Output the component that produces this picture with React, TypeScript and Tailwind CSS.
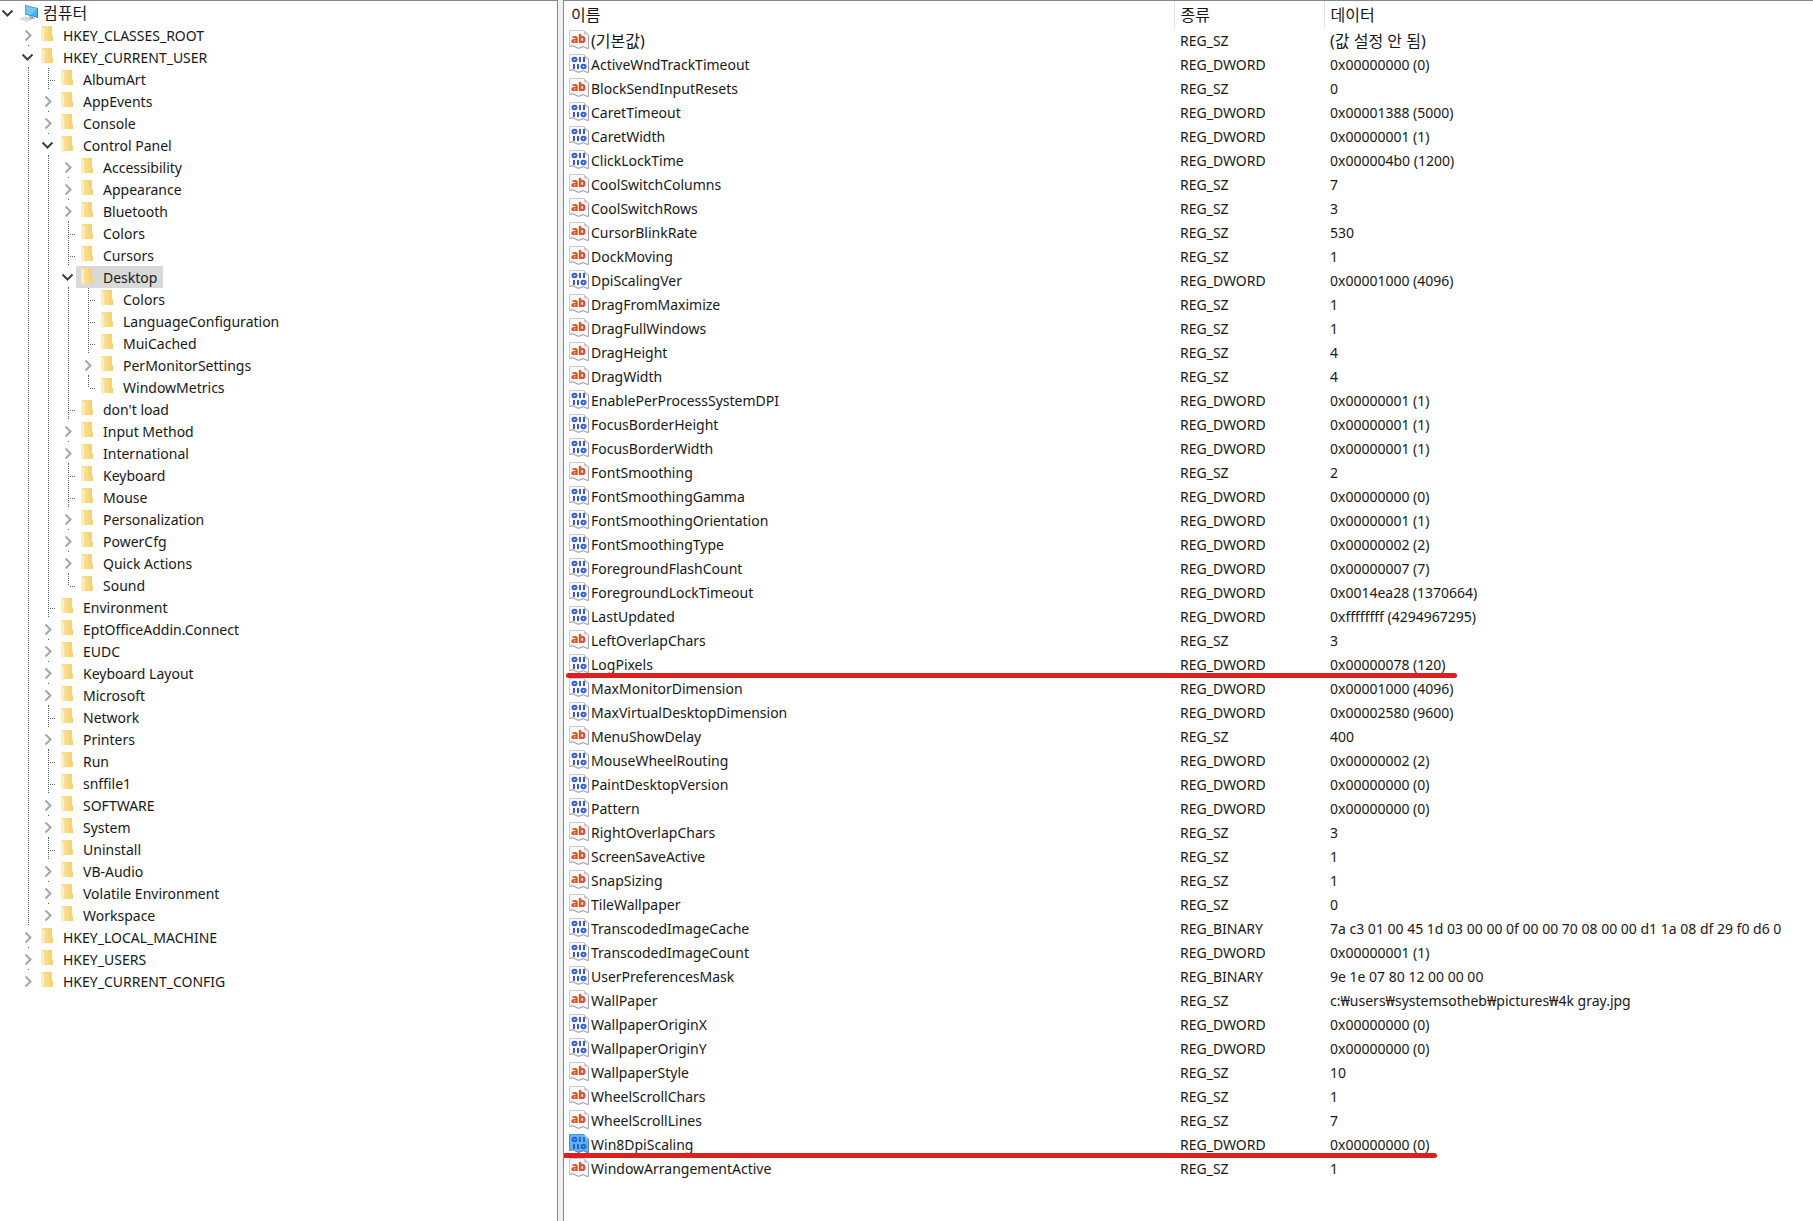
import { useState } from "react";

type Node = { name: string; open?: boolean; children?: Node[]; expandable?: boolean };

const leaf = (name: string): Node => ({ name });
const closed = (name: string): Node => ({ name, expandable: true });
const opened = (name: string, children: Node[]): Node => ({ name, expandable: true, open: true, children });

const root: Node = opened("컴퓨터", [
  closed("HKEY_CLASSES_ROOT"),
  opened("HKEY_CURRENT_USER", [
    leaf("AlbumArt"),
    closed("AppEvents"),
    closed("Console"),
    opened("Control Panel", [
      closed("Accessibility"),
      closed("Appearance"),
      closed("Bluetooth"),
      leaf("Colors"),
      leaf("Cursors"),
      opened("Desktop", [
        leaf("Colors"),
        leaf("LanguageConfiguration"),
        leaf("MuiCached"),
        closed("PerMonitorSettings"),
        leaf("WindowMetrics"),
      ]),
      leaf("don't load"),
      closed("Input Method"),
      closed("International"),
      leaf("Keyboard"),
      leaf("Mouse"),
      closed("Personalization"),
      closed("PowerCfg"),
      closed("Quick Actions"),
      leaf("Sound"),
    ]),
    leaf("Environment"),
    closed("EptOfficeAddin.Connect"),
    closed("EUDC"),
    closed("Keyboard Layout"),
    closed("Microsoft"),
    leaf("Network"),
    closed("Printers"),
    leaf("Run"),
    leaf("snffile1"),
    closed("SOFTWARE"),
    closed("System"),
    leaf("Uninstall"),
    closed("VB-Audio"),
    closed("Volatile Environment"),
    closed("Workspace"),
  ]),
  closed("HKEY_LOCAL_MACHINE"),
  closed("HKEY_USERS"),
  closed("HKEY_CURRENT_CONFIG"),
]);

const values: [string, string, string][] = [
  ["(기본값)", "REG_SZ", "(값 설정 안 됨)"],
  ["ActiveWndTrackTimeout", "REG_DWORD", "0x00000000 (0)"],
  ["BlockSendInputResets", "REG_SZ", "0"],
  ["CaretTimeout", "REG_DWORD", "0x00001388 (5000)"],
  ["CaretWidth", "REG_DWORD", "0x00000001 (1)"],
  ["ClickLockTime", "REG_DWORD", "0x000004b0 (1200)"],
  ["CoolSwitchColumns", "REG_SZ", "7"],
  ["CoolSwitchRows", "REG_SZ", "3"],
  ["CursorBlinkRate", "REG_SZ", "530"],
  ["DockMoving", "REG_SZ", "1"],
  ["DpiScalingVer", "REG_DWORD", "0x00001000 (4096)"],
  ["DragFromMaximize", "REG_SZ", "1"],
  ["DragFullWindows", "REG_SZ", "1"],
  ["DragHeight", "REG_SZ", "4"],
  ["DragWidth", "REG_SZ", "4"],
  ["EnablePerProcessSystemDPI", "REG_DWORD", "0x00000001 (1)"],
  ["FocusBorderHeight", "REG_DWORD", "0x00000001 (1)"],
  ["FocusBorderWidth", "REG_DWORD", "0x00000001 (1)"],
  ["FontSmoothing", "REG_SZ", "2"],
  ["FontSmoothingGamma", "REG_DWORD", "0x00000000 (0)"],
  ["FontSmoothingOrientation", "REG_DWORD", "0x00000001 (1)"],
  ["FontSmoothingType", "REG_DWORD", "0x00000002 (2)"],
  ["ForegroundFlashCount", "REG_DWORD", "0x00000007 (7)"],
  ["ForegroundLockTimeout", "REG_DWORD", "0x0014ea28 (1370664)"],
  ["LastUpdated", "REG_DWORD", "0xffffffff (4294967295)"],
  ["LeftOverlapChars", "REG_SZ", "3"],
  ["LogPixels", "REG_DWORD", "0x00000078 (120)"],
  ["MaxMonitorDimension", "REG_DWORD", "0x00001000 (4096)"],
  ["MaxVirtualDesktopDimension", "REG_DWORD", "0x00002580 (9600)"],
  ["MenuShowDelay", "REG_SZ", "400"],
  ["MouseWheelRouting", "REG_DWORD", "0x00000002 (2)"],
  ["PaintDesktopVersion", "REG_DWORD", "0x00000000 (0)"],
  ["Pattern", "REG_DWORD", "0x00000000 (0)"],
  ["RightOverlapChars", "REG_SZ", "3"],
  ["ScreenSaveActive", "REG_SZ", "1"],
  ["SnapSizing", "REG_SZ", "1"],
  ["TileWallpaper", "REG_SZ", "0"],
  ["TranscodedImageCache", "REG_BINARY", "7a c3 01 00 45 1d 03 00 00 0f 00 00 70 08 00 00 d1 1a 08 df 29 f0 d6 0"],
  ["TranscodedImageCount", "REG_DWORD", "0x00000001 (1)"],
  ["UserPreferencesMask", "REG_BINARY", "9e 1e 07 80 12 00 00 00"],
  ["WallPaper", "REG_SZ", "c:₩users₩systemsotheb₩pictures₩4k gray.jpg"],
  ["WallpaperOriginX", "REG_DWORD", "0x00000000 (0)"],
  ["WallpaperOriginY", "REG_DWORD", "0x00000000 (0)"],
  ["WallpaperStyle", "REG_SZ", "10"],
  ["WheelScrollChars", "REG_SZ", "1"],
  ["WheelScrollLines", "REG_SZ", "7"],
  ["Win8DpiScaling", "REG_DWORD", "0x00000000 (0)"],
  ["WindowArrangementActive", "REG_SZ", "1"],
];

function ComputerIcon() {
  return (
    <svg viewBox="0 0 20 20" className="size-5 shrink-0" aria-hidden="true">
      <path d="M6 3 L19 6 V16 L6 12.500 Z" fill="#3c7fb0" />
      <path d="M6.500 3.700 L18 6.400 V14.800 L6.500 11.800 Z" fill="#45b2f5" />
      <path d="M6.500 3.700 L18 6.400 L12 13 L6.500 11.800 Z" fill="#6cc8fa" />
      <path d="M10 14 L14 15 L16 17 L11 16.500 Z" fill="#8d979e" />
      <path d="M0 17 L6 14.500 L14 17 L8 20 Z" fill="#c9cdd0" />
      <path d="M2 17 L9 19 M4.500 16 L11 18.500" stroke="#f2f3f4" strokeWidth="0.700" />
    </svg>
  );
}

function FolderIcon() {
  return (
    <svg viewBox="0 0 20 20" className="size-5 shrink-0" aria-hidden="true">
      <path d="M4 2 H13 V11 L14 12 V17 H4 Z" fill="#f9dc8a" />
      <path d="M9 2 H13 V11 L14 12 V17 H10 Z" fill="#f6d476" />
      <path d="M2 2 L6 3.500 V16 L5 18.500 L2 16.500 Z" fill="#feedb8" />
      <path d="M2 2 H5 L6 3.500 V16 L5.500 16.500 V4 Z" fill="#f6d88a" />
    </svg>
  );
}

function Page({ tint }: { tint: boolean }) {
  return (
    <>
      <path
        d="M0.500 0.500 H15 L19.500 5 V18.500 L17 18 Q14.500 15.500 12 17.500 Q9 19.500 6.500 17 Q4 14.500 0.500 16.500 Z"
        fill={tint ? "#64b0f3" : "#f7f8fa"}
        stroke={tint ? "#4a94d8" : "#c9ccd0"}
      />
      <path
        d="M19.500 5 V18.500 L17 18 Q14.500 15.500 12 17.500 Q9 19.500 6.500 17 Q4 14.500 0.500 16.500"
        fill="none"
        stroke={tint ? "#5b87ad" : "#a0a4a8"}
      />
      <path d="M15 0.500 V3 Q15.500 5 19.500 5 Z" fill={tint ? "#8cc6f6" : "#c0c4c8"} />
    </>
  );
}

function StringIcon() {
  return (
    <svg viewBox="0 0 20 20" className="size-5 shrink-0" aria-hidden="true">
      <Page tint={false} />
      <text x="9.500" y="13" textAnchor="middle" fontSize="12" fontWeight="800" fill="#dc5034" fontFamily="Open Sans, Noto Sans, sans-serif">
        ab
      </text>
    </svg>
  );
}

function BinaryIcon({ tint }: { tint: boolean }) {
  return (
    <svg viewBox="0 0 20 20" className="size-5 shrink-0" aria-hidden="true">
      <Page tint={tint} />
      <g fill="none" stroke={tint ? "#1f66d2" : "#3a5ad6"} strokeWidth="2">
        <ellipse cx="5.500" cy="5.500" rx="2" ry="1.700" />
        <path d="M11 3 V8 M15 3 V8" />
        <path d="M5 10 V15 M9 10 V15" />
        <ellipse cx="14.500" cy="12.500" rx="2" ry="1.700" />
      </g>
    </svg>
  );
}

function Expander({ open, name, onClick }: { open: boolean; name: string; onClick: () => void }) {
  return (
    <button type="button" aria-label={name} aria-expanded={open} onClick={onClick} className="flex h-[21px] w-4 items-center justify-center bg-white">
      <svg viewBox="0 0 16 16" className="size-4 shrink-0" fill="none" aria-hidden="true">
        {open ? (
          <path d="M2.500 5.500 L7.500 10.500 L12.500 5.500" stroke="#404040" strokeWidth="2" />
        ) : (
          <path d="M5.500 3.500 L10.500 8.500 L5.500 13.500" stroke="#a6a6a6" strokeWidth="2" />
        )}
      </svg>
    </button>
  );
}

const vertical = "w-px bg-[linear-gradient(#606060_50%,transparent_50%)] bg-[length:1px_2px]";

function Label({ text }: { text: string }) {
  return <span className={/[가-힣]/.test(text) ? "text-base leading-[22px]" : ""}>{text}</span>;
}

function TreeRow({ node, level, guides, last, path }: { node: Node; level: number; guides: boolean[]; last: boolean; path: string }) {
  const [open, setOpen] = useState(!!node.open);
  const selected = path.endsWith("/Control Panel/Desktop");
  const branch = level > 0;
  return (
    <li role="treeitem" aria-expanded={node.expandable ? open : undefined} aria-selected={selected}>
      <div className="flex h-[22px]">
        {guides.map((line, i) => (
          <span key={i} className="flex w-5 shrink-0 pl-2">
            {line && <span className={vertical} />}
          </span>
        ))}
        {node.expandable ? (
          <span className="flex w-4 shrink-0 flex-col items-center">
            <Expander open={open} name={node.name} onClick={() => setOpen(!open)} />
            {branch && !last && <span className="ml-px size-px bg-[#606060]" />}
          </span>
        ) : (
          <span className="flex w-4 shrink-0 pl-2">
            <span className={last ? `${vertical} h-3` : `${vertical} h-full`} />
            <span className="mt-3 h-px w-2 bg-[linear-gradient(90deg,transparent_50%,#606060_50%)] bg-[length:2px_1px]" />
          </span>
        )}
        <button
          type="button"
          className={
            selected
              ? "flex h-[22px] items-start gap-1 bg-[#d9d9d9] pr-1.5 pl-[3px] leading-6 whitespace-nowrap"
              : "flex h-[22px] items-start gap-1 pr-1.5 pl-[3px] leading-6 whitespace-nowrap"
          }
        >
          {level === 0 ? <ComputerIcon /> : <FolderIcon />}
          <Label text={node.name} />
        </button>
      </div>
      {open && node.children && (
        <ul role="group">
          {node.children.map((child, i) => (
            <TreeRow
              key={child.name}
              node={child}
              level={level + 1}
              guides={[...guides, branch && !last]}
              last={i === node.children!.length - 1}
              path={`${path}/${child.name}`}
            />
          ))}
        </ul>
      )}
    </li>
  );
}

const underline = "absolute top-5 z-10 h-[5px] rounded-full bg-[#df1f1f]";

export default function App() {
  return (
    <div className="flex h-screen overflow-hidden bg-[#f0f0f0] font-['Noto_Sans','Noto_Sans_CJK_KR',sans-serif] text-sm leading-[22px] text-[#181818]">
      <nav aria-label="레지스트리 키" className="w-[558px] shrink-0 overflow-hidden border-t border-r border-[#828790] bg-white pt-px">
        <ul role="tree">
          <TreeRow node={root} level={0} guides={[]} last path={root.name} />
        </ul>
      </nav>
      <main className="ml-[5px] min-w-0 flex-1 overflow-hidden border-t border-l border-[#828790] bg-white">
        <table className="w-full table-fixed border-collapse text-left whitespace-nowrap">
          <colgroup>
            <col className="w-[610px]" />
            <col className="w-[150px]" />
            <col />
          </colgroup>
          <thead>
            <tr className="h-7">
              <th className="border-r border-[#e0e3e8] p-0 pl-[7px] font-normal">
                <button type="button"><Label text="이름" /></button>
              </th>
              <th className="border-r border-[#e0e3e8] p-0 pl-1.5 font-normal">
                <button type="button"><Label text="종류" /></button>
              </th>
              <th className="p-0 pl-1.5 font-normal">
                <button type="button"><Label text="데이터" /></button>
              </th>
            </tr>
          </thead>
          <tbody>
            {values.map(([name, type, data]) => (
              <tr key={name} className="h-6">
                <td className="relative p-0 pl-[5px]">
                  <span className="flex items-start gap-0.5">
                    {type === "REG_SZ" ? <StringIcon /> : <BinaryIcon tint={name === "Win8DpiScaling"} />}
                    <Label text={name} />
                  </span>
                  {name === "LogPixels" && <span className={`${underline} left-0.5 w-[891px]`} />}
                  {name === "Win8DpiScaling" && <span className={`${underline} -left-px w-[874px]`} />}
                </td>
                <td className="p-0 pl-1.5">{type}</td>
                <td className="overflow-hidden p-0 pl-1.5">
                  <Label text={data} />
                </td>
              </tr>
            ))}
          </tbody>
        </table>
      </main>
    </div>
  );
}
